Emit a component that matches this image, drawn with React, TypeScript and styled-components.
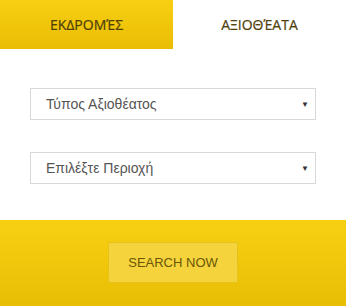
import React from "react";
import styled, { createGlobalStyle } from "styled-components";

const Global = createGlobalStyle`
  html, body { margin: 0; padding: 0; background: #ffffff; }
  body { width: 346px; height: 306px; overflow: hidden; }
`;

const Widget = styled.div`
  width: 346px;
  height: 306px;
  display: flex;
  flex-direction: column;
  background: #ffffff;
`;

const Tabs = styled.div`
  display: grid;
  grid-template-columns: 173px 173px;
  height: 49px;
`;

const Tab = styled.div<{ $active?: boolean }>`
  display: flex;
  align-items: center;
  justify-content: center;
  font-family: "Open Sans", "Noto Sans", sans-serif;
  font-size: 14px;
  color: #4f400a;
  -webkit-text-stroke: 0.2px #4f400a;
  background: ${(p) =>
    p.$active ? "linear-gradient(180deg, #f8cf12 0%, #e9bd04 100%)" : "#ffffff"};
`;

const Form = styled.div`
  flex: 1;
  display: flex;
  flex-direction: column;
  gap: 32px;
  padding: 39px 30px 0 30px;
`;

const Select = styled.div`
  height: 32px;
  box-sizing: border-box;
  border: 1px solid #d8d8d8;
  display: flex;
  align-items: center;
  justify-content: space-between;
  padding: 0 6px 0 15px;
  font-family: "Liberation Sans", Arial, sans-serif;
  font-size: 14px;
  color: #555555;
`;

const Arrow = styled.span`
  font-size: 8px;
  color: #333333;
  margin-top: 1px;
`;

const Footer = styled.div`
  height: 86px;
  display: flex;
  align-items: flex-start;
  justify-content: center;
  padding-top: 22px;
  box-sizing: border-box;
  background: linear-gradient(180deg, #f8d013 0%, #e8be04 100%);
`;

const Button = styled.button`
  width: 130px;
  height: 41px;
  box-sizing: border-box;
  background: #f5d33d;
  border: 1px solid #e6c21a;
  font-family: "Liberation Sans", Arial, sans-serif;
  font-size: 13px;
  color: #6a5605;
  padding: 0;
  cursor: pointer;
`;

export default function App() {
  return (
    <>
      <Global />
      <Widget>
        <Tabs>
          <Tab $active>ΕΚΔΡΟΜΈΣ</Tab>
          <Tab>ΑΞΙΟΘΈΑΤΑ</Tab>
        </Tabs>
        <Form>
          <Select>
            <span>Τύπος Αξιοθέατος</span>
            <Arrow>▼</Arrow>
          </Select>
          <Select>
            <span>Επιλέξτε Περιοχή</span>
            <Arrow>▼</Arrow>
          </Select>
        </Form>
        <Footer>
          <Button>SEARCH NOW</Button>
        </Footer>
      </Widget>
    </>
  );
}
